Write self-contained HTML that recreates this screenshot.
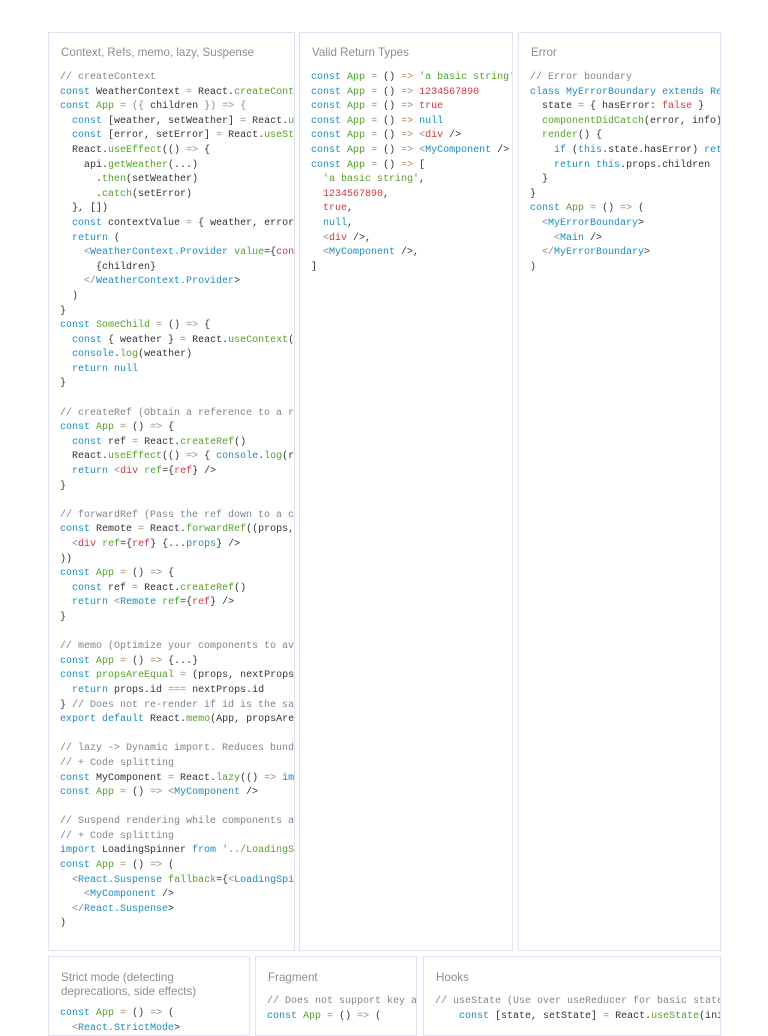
<!DOCTYPE html>
<html><head><meta charset="utf-8"><style>
*{margin:0;padding:0;box-sizing:border-box}
body{width:768px;height:1024px;background:#fff;position:relative;overflow:hidden;font-family:"Liberation Sans",sans-serif}
.card{position:absolute;border:1px solid #dfe1f3;background:#fff;overflow:hidden}
.t{position:absolute;left:12px;top:13px;font-size:11.6px;color:#8f8f8f;line-height:14px}
pre{position:absolute;left:11px;font-family:"Liberation Mono","DejaVu Sans Mono",monospace;font-size:10px;line-height:14.6px;color:#333;white-space:pre}
.k{color:#1d8bbf}.f{color:#53a22a}.s{color:#d5353f}.o{color:#a8866a}.c{color:#7f8690}.p{color:#888}
</style></head><body>
<div class="card" style="left:48px;top:32px;width:247px;height:919px">
<div class="t">Context, Refs, memo, lazy, Suspense</div>
<pre style="top:38px"><span class="c">// createContext</span>
<span class="k">const</span> WeatherContext <span class="o">=</span> React.<span class="f">createContext</span>()
<span class="k">const</span> <span class="f">App</span> <span class="o">=</span> <span class="p">({</span> children <span class="p">})</span> <span class="o">=&gt;</span> <span class="p">{</span>
  <span class="k">const</span> [weather, setWeather] <span class="o">=</span> React.<span class="f">useState</span>()
  <span class="k">const</span> [error, setError] <span class="o">=</span> React.<span class="f">useState</span>()
  React.<span class="f">useEffect</span>(() <span class="o">=&gt;</span> {
    api.<span class="f">getWeather</span>(...)
      .<span class="f">then</span>(setWeather)
      .<span class="f">catch</span>(setError)
  }, [])
  <span class="k">const</span> contextValue <span class="o">=</span> { weather, error }
  <span class="k">return</span> (
    <span class="p">&lt;</span><span class="k">WeatherContext.Provider</span> <span class="f">value</span>={<span class="s">contextValue</span>}&gt;
      {children}
    <span class="p">&lt;/</span><span class="k">WeatherContext.Provider</span>&gt;
  )
}
<span class="k">const</span> <span class="f">SomeChild</span> <span class="o">=</span> () <span class="o">=&gt;</span> {
  <span class="k">const</span> { weather } <span class="o">=</span> React.<span class="f">useContext</span>(WeatherContext)
  <span class="k">console</span>.<span class="f">log</span>(weather)
  <span class="k">return</span> <span class="k">null</span>
}

<span class="c">// createRef (Obtain a reference to a rendered DOM node)</span>
<span class="k">const</span> <span class="f">App</span> <span class="o">=</span> () <span class="o">=&gt;</span> {
  <span class="k">const</span> ref <span class="o">=</span> React.<span class="f">createRef</span>()
  React.<span class="f">useEffect</span>(() <span class="o">=&gt;</span> { <span class="k">console</span>.<span class="f">log</span>(ref.current) }, [])
  <span class="k">return</span> <span class="p">&lt;</span><span class="s">div</span> <span class="f">ref</span>={<span class="s">ref</span>} /&gt;
}

<span class="c">// forwardRef (Pass the ref down to a child)</span>
<span class="k">const</span> Remote <span class="o">=</span> React.<span class="f">forwardRef</span>((props, ref) <span class="o">=&gt;</span> (
  <span class="p">&lt;</span><span class="s">div</span> <span class="f">ref</span>={<span class="s">ref</span>} {...<span class="k">props</span>} /&gt;
))
<span class="k">const</span> <span class="f">App</span> <span class="o">=</span> () <span class="o">=&gt;</span> {
  <span class="k">const</span> ref <span class="o">=</span> React.<span class="f">createRef</span>()
  <span class="k">return</span> <span class="p">&lt;</span><span class="k">Remote</span> <span class="f">ref</span>={<span class="s">ref</span>} /&gt;
}

<span class="c">// memo (Optimize your components to avoid wasteful renders)</span>
<span class="k">const</span> <span class="f">App</span> <span class="o">=</span> () <span class="o">=&gt;</span> {...}
<span class="k">const</span> <span class="f">propsAreEqual</span> <span class="o">=</span> (props, nextProps) <span class="o">=&gt;</span> {
  <span class="k">return</span> props.id <span class="o">===</span> nextProps.id
} <span class="c">// Does not re-render if id is the same</span>
<span class="k">export</span> <span class="k">default</span> React.<span class="f">memo</span>(App, propsAreEqual)

<span class="c">// lazy -&gt; Dynamic import. Reduces bundle size</span>
<span class="c">// + Code splitting</span>
<span class="k">const</span> MyComponent <span class="o">=</span> React.<span class="f">lazy</span>(() <span class="o">=&gt;</span> <span class="k">import</span>('./MyComponent'))
<span class="k">const</span> <span class="f">App</span> <span class="o">=</span> () <span class="o">=&gt;</span> <span class="p">&lt;</span><span class="k">MyComponent</span> /&gt;

<span class="c">// Suspend rendering while components are loading</span>
<span class="c">// + Code splitting</span>
<span class="k">import</span> LoadingSpinner <span class="k">from</span> <span class="f">'../LoadingSpinner'</span>
<span class="k">const</span> <span class="f">App</span> <span class="o">=</span> () <span class="o">=&gt;</span> (
  <span class="p">&lt;</span><span class="k">React.Suspense</span> <span class="f">fallback</span>={<span class="p">&lt;</span><span class="k">LoadingSpinner</span> /&gt;}&gt;
    <span class="p">&lt;</span><span class="k">MyComponent</span> /&gt;
  <span class="p">&lt;/</span><span class="k">React.Suspense</span>&gt;
)</pre></div>

<div class="card" style="left:299px;top:32px;width:214px;height:919px">
<div class="t">Valid Return Types</div>
<pre style="top:38px"><span class="k">const</span> <span class="f">App</span> <span class="o">=</span> () <span class="o">=&gt;</span> <span class="f">'a basic string'</span>
<span class="k">const</span> <span class="f">App</span> <span class="o">=</span> () <span class="o">=&gt;</span> <span class="s">1234567890</span>
<span class="k">const</span> <span class="f">App</span> <span class="o">=</span> () <span class="o">=&gt;</span> <span class="s">true</span>
<span class="k">const</span> <span class="f">App</span> <span class="o">=</span> () <span class="o">=&gt;</span> <span class="k">null</span>
<span class="k">const</span> <span class="f">App</span> <span class="o">=</span> () <span class="o">=&gt;</span> <span class="p">&lt;</span><span class="s">div</span> /&gt;
<span class="k">const</span> <span class="f">App</span> <span class="o">=</span> () <span class="o">=&gt;</span> <span class="p">&lt;</span><span class="k">MyComponent</span> /&gt;
<span class="k">const</span> <span class="f">App</span> <span class="o">=</span> () <span class="o">=&gt;</span> [
  <span class="f">'a basic string'</span>,
  <span class="s">1234567890</span>,
  <span class="s">true</span>,
  <span class="k">null</span>,
  <span class="p">&lt;</span><span class="s">div</span> /&gt;,
  <span class="p">&lt;</span><span class="k">MyComponent</span> /&gt;,
]</pre></div>

<div class="card" style="left:518px;top:32px;width:203px;height:919px">
<div class="t">Error</div>
<pre style="top:38px"><span class="c">// Error boundary</span>
<span class="k">class</span> <span class="k">MyErrorBoundary</span> <span class="k">extends</span> <span class="k">React.Component</span> {
  state <span class="o">=</span> { hasError: <span class="s">false</span> }
  <span class="f">componentDidCatch</span>(error, info) {...}
  <span class="f">render</span>() {
    <span class="k">if</span> (<span class="k">this</span>.state.hasError) <span class="k">return</span> ...
    <span class="k">return</span> <span class="k">this</span>.props.children
  }
}
<span class="k">const</span> <span class="f">App</span> <span class="o">=</span> () <span class="o">=&gt;</span> (
  <span class="p">&lt;</span><span class="k">MyErrorBoundary</span>&gt;
    <span class="p">&lt;</span><span class="k">Main</span> /&gt;
  <span class="p">&lt;/</span><span class="k">MyErrorBoundary</span>&gt;
)</pre></div>

<div class="card" style="left:48px;top:956px;width:202px;height:80px">
<div class="t" style="top:14px">Strict mode (detecting<br>deprecations, side effects)</div>
<pre style="top:50px"><span class="k">const</span> <span class="f">App</span> <span class="o">=</span> () <span class="o">=&gt;</span> (
  <span class="p">&lt;</span><span class="k">React.StrictMode</span>&gt;</pre></div>

<div class="card" style="left:255px;top:956px;width:162px;height:80px">
<div class="t" style="top:14px">Fragment</div>
<pre style="top:38px"><span class="c">// Does not support key attribute</span>
<span class="k">const</span> <span class="f">App</span> <span class="o">=</span> () <span class="o">=&gt;</span> (</pre></div>

<div class="card" style="left:423px;top:956px;width:298px;height:80px">
<div class="t" style="top:14px">Hooks</div>
<pre style="top:38px"><span class="c">// useState (Use over useReducer for basic state)</span>
    <span class="k">const</span> [state, setState] <span class="o">=</span> React.<span class="f">useState</span>(initialState)</pre></div>
</body></html>
